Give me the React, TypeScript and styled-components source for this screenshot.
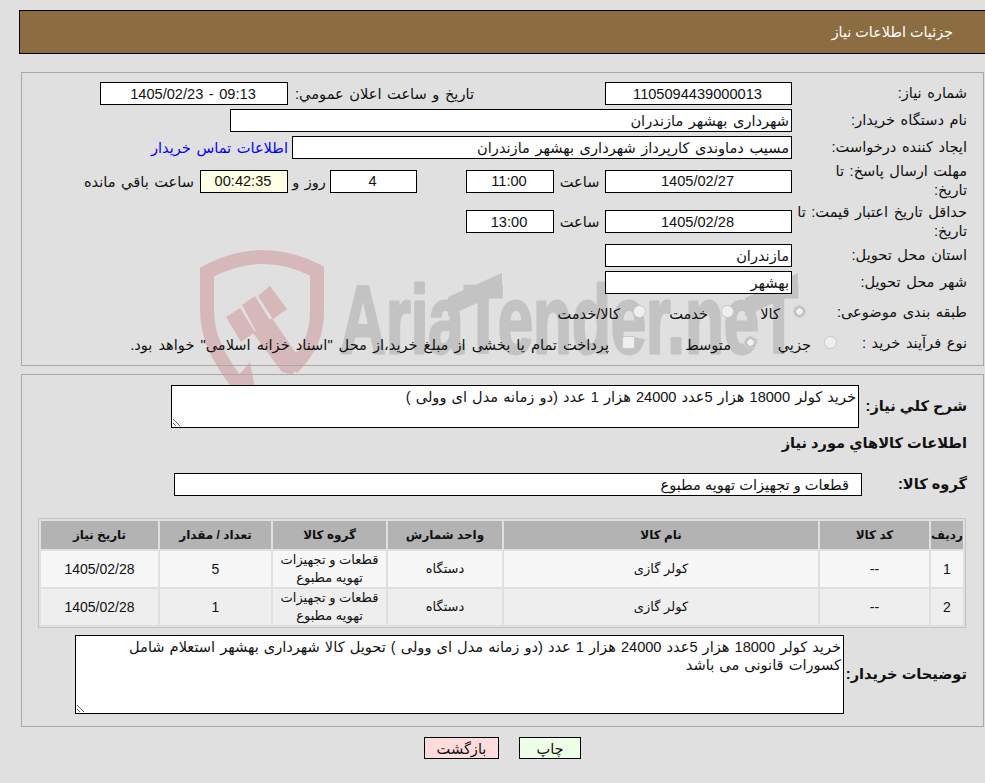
import React, { FC } from "react";
import styled, { createGlobalStyle } from "styled-components";

const FONT = `"Liberation Sans", "DejaVu Sans", sans-serif`;

const GlobalStyle = createGlobalStyle`
  html, body {
    margin: 0;
    padding: 0;
    background-color: #e0e0e0;
  }
  body {
    font-family: ${FONT};
    font-size: 14.6px;
    word-spacing: 1.5px;
    color: #111111;
  }
`;

const goods = [
  { id: 1, qty: 5 },
  { id: 2, qty: 1 },
];

const Watermark: FC = () => (
  <WatermarkSvg viewBox="0 0 985 783" aria-hidden="true">
    <g fill="#d7b8ba" stroke="none">
      <path
        d="M241 388C216 356 207 335 207 310L207 272Q235 257 262 257Q290 257 317 271L317 310C317 335 310 350 292 368"
        fill="none"
        stroke="#d7b8ba"
        strokeWidth="14"
      />
      <polygon points="272,318 302,362 292,375 282,372 253,333" />
      <polygon points="226,317 240,308 255,332 241,342" />
      <polygon points="242,305 255,296 273,325 258,335" />
      <polygon points="258,296 270,286 287,309 273,319" />
      <polygon points="250,362 232,383 255,388" />
    </g>
    <g fill="#c3c3c3" stroke="#c3c3c3">
      <text
        x="340"
        y="353"
        direction="ltr"
        textAnchor="start"
        fontFamily="Liberation Sans"
        fontWeight="700"
        fontSize="97"
        strokeWidth="3"
        strokeLinejoin="round"
        textLength="458"
        lengthAdjust="spacingAndGlyphs"
      >
        AriaTender.neT
      </text>
      <polygon points="448,297 502,273 502,292 448,316" stroke="none" />
      <polygon points="745,298 798,273 798,292 745,316" stroke="none" />
    </g>
  </WatermarkSvg>
);

export default function App() {
  return (
    <Page dir="rtl">
      <GlobalStyle />
      <Watermark />
      <Header>جزئیات اطلاعات نیاز</Header>

      <Panel $mt={18} $pt={7} $pb={7}>
        <Row $h={27}>
          <Label>شماره نیاز:</Label>
          <Field $w={187}>1105094439000013</Field>
          <Caption $w={317} $pr={131}>
            تاریخ و ساعت اعلان عمومي:
          </Caption>
          <Field $w={188}>09:13 - 1405/02/23</Field>
        </Row>
        <Row $h={27}>
          <Label>نام دستگاه خریدار:</Label>
          <Field $w={562} $start>
            شهرداری بهشهر مازندران
          </Field>
        </Row>
        <Row $h={27}>
          <Label>ایجاد کننده درخواست:</Label>
          <Field $w={500} $start>
            مسیب دماوندی کارپرداز شهرداری بهشهر مازندران
          </Field>
          <ContactLink href="#">اطلاعات تماس خریدار</ContactLink>
        </Row>
        <Row $h={40}>
          <Label>
            مهلت ارسال پاسخ: تا
            <br />
            تاریخ:
          </Label>
          <Field $w={187}>1405/02/27</Field>
          <Caption $w={51}>ساعت</Caption>
          <Field $w={88}>11:00</Field>
          <Caption $w={49} />
          <Field $w={87}>4</Field>
          <Caption $w={42}>روز و</Caption>
          <Field $w={88} $timer>
            00:42:35
          </Field>
          <Caption $pr={6}>ساعت باقي مانده</Caption>
        </Row>
        <Row $h={41}>
          <Label>
            حداقل تاریخ اعتبار قیمت: تا
            <br />
            تاریخ:
          </Label>
          <Field $w={187}>1405/02/28</Field>
          <Caption $w={51}>ساعت</Caption>
          <Field $w={88}>13:00</Field>
        </Row>
        <Row $h={27}>
          <Label>استان محل تحویل:</Label>
          <Field $w={187} $start>
            مازندران
          </Field>
        </Row>
        <Row $h={27}>
          <Label>شهر محل تحویل:</Label>
          <Field $w={187} $start>
            بهشهر
          </Field>
        </Row>
        <Row $h={32}>
          <Label $w={161}>طبقه بندی موضوعی:</Label>
          <Option $w={72}>
            <Radio name="kind" defaultChecked />
            کالا
          </Option>
          <Option $w={88}>
            <Radio name="kind" />
            خدمت
          </Option>
          <Option>
            <Radio name="kind" />
            کالا/خدمت
          </Option>
        </Row>
        <Row $h={30}>
          <Label $w={130}>نوع فرآیند خرید :</Label>
          <Option $w={80}>
            <Radio name="process" />
            جزيي
          </Option>
          <Option $w={122}>
            <Radio name="process" defaultChecked />
            متوسط
          </Option>
          <Option $wide>
            <Check />
            پرداخت تمام یا بخشی از مبلغ خرید،از محل "اسناد خزانه اسلامی" خواهد بود.
          </Option>
        </Row>
      </Panel>

      <Panel $mt={8} $pt={10} $pb={12}>
        <Row>
          <Label $w={108} $bold>
            شرح كلي نياز:
          </Label>
          <TextBox
            $w={688}
            $h={43}
            readOnly
            value="خرید کولر 18000 هزار 5عدد 24000 هزار 1 عدد (دو زمانه مدل ای وولی )"
          />
        </Row>
        <Row $h={31}>
          <Label $w="auto" $bold>
            اطلاعات كالاهاي مورد نياز
          </Label>
        </Row>
        <Row $h={23} $mt={14}>
          <Label $w={105} $bold>
            گروه كالا:
          </Label>
          <Field $w={688} $start $pr={12} $tight>
            قطعات و تجهیزات تهویه مطبوع
          </Field>
        </Row>
        <GoodsTable>
          <colgroup>
            <col width={32} />
            <col width={109} />
            <col width={314} />
            <col width={114} />
            <col width={113} />
            <col width={111} />
            <col width={117} />
          </colgroup>
          <thead>
            <tr>
              <th>ردیف</th>
              <th>کد کالا</th>
              <th>نام کالا</th>
              <th>واحد شمارش</th>
              <th>گروه کالا</th>
              <th>تعداد / مقدار</th>
              <th>تاریخ نیاز</th>
            </tr>
          </thead>
          <tbody>
            {goods.map((item) => (
              <tr key={item.id}>
                <td>{item.id}</td>
                <td>--</td>
                <TextCell>کولر گازی</TextCell>
                <TextCell>دستگاه</TextCell>
                <TextCell>قطعات و تجهیزات تهویه مطبوع</TextCell>
                <td>{item.qty}</td>
                <td>1405/02/28</td>
              </tr>
            ))}
          </tbody>
        </GoodsTable>
        <DescriptionRow>
          <Label $w={123} $bold>
            توضیحات خریدار:
          </Label>
          <TextBox
            $w={769}
            $h={79}
            readOnly
            value="خرید کولر 18000 هزار 5عدد 24000 هزار 1 عدد (دو زمانه مدل ای وولی ) تحویل کالا شهرداری بهشهر استعلام شامل کسورات قانونی می باشد"
          />
        </DescriptionRow>
      </Panel>

      <Actions>
        <ActionButton $w={62} $bg="#edffe6">
          چاپ
        </ActionButton>
        <ActionButton $w={75} $bg="#ffdcdc">
          بازگشت
        </ActionButton>
      </Actions>
    </Page>
  );
}

const Page = styled.div`
  position: relative;
  height: 783px;
  box-sizing: border-box;
  padding: 10px 0 0 19px;
  overflow: hidden;
`;

const WatermarkSvg = styled.svg`
  position: absolute;
  left: 0;
  top: 0;
  width: 985px;
  height: 783px;
  pointer-events: none;
`;

const Header = styled.header`
  position: relative;
  height: 44px;
  box-sizing: border-box;
  display: flex;
  align-items: center;
  padding-right: 32px;
  border: 1px solid #000000;
  border-right: none;
  background-color: #8c6d42;
  color: #ffffff;
  font-size: 14.4px;
  word-spacing: 0;
`;

const Panel = styled.section<{ $mt: number; $pt: number; $pb: number }>`
  position: relative;
  margin: ${(p) => p.$mt}px 1px 0 2px;
  padding: ${(p) => p.$pt}px 16px ${(p) => p.$pb}px 0;
  border: 1px solid #a8a8a8;
`;

const Row = styled.div<{ $h?: number; $mt?: number }>`
  display: flex;
  align-items: center;
  ${(p) => p.$h && `height: ${p.$h}px;`}
  ${(p) => p.$mt && `margin-top: ${p.$mt}px;`}
`;

const Label = styled.div<{ $w?: number | "auto"; $bold?: boolean }>`
  flex: none;
  box-sizing: border-box;
  width: ${(p) => (p.$w === "auto" ? "auto" : `${p.$w ?? 175}px`)};
  line-height: 19px;
  white-space: nowrap;
  font-weight: ${(p) => (p.$bold ? 700 : 400)};
  ${(p) => p.$bold && "word-spacing: 0;"}
`;

const Field = styled.div<{
  $w: number;
  $start?: boolean;
  $timer?: boolean;
  $tight?: boolean;
  $pr?: number;
}>`
  flex: none;
  box-sizing: border-box;
  width: ${(p) => p.$w}px;
  height: 23px;
  display: flex;
  align-items: center;
  justify-content: ${(p) => (p.$start ? "flex-start" : "center")};
  padding-right: ${(p) => p.$pr ?? 2}px;
  border: 1px solid #000000;
  background-color: ${(p) => (p.$timer ? "#ffffe6" : "#ffffff")};
  white-space: nowrap;
  ${(p) => p.$tight && "word-spacing: 0;"}
`;

const Caption = styled.div<{ $w?: number; $pr?: number }>`
  flex: none;
  box-sizing: border-box;
  ${(p) => p.$w && `width: ${p.$w}px;`}
  padding-right: ${(p) => p.$pr ?? 0}px;
  text-align: ${(p) => (p.$pr ? "right" : "center")};
  white-space: nowrap;
`;

const ContactLink = styled.a`
  margin-right: 4px;
  color: #0000ff;
  text-decoration: none;
  white-space: nowrap;
`;

const Option = styled.label<{ $w?: number; $wide?: boolean }>`
  flex: none;
  ${(p) => p.$w && `width: ${p.$w}px;`}
  display: flex;
  align-items: center;
  gap: 13px;
  padding-top: 2px;
  white-space: nowrap;
  ${(p) => p.$wide && "word-spacing: 2px;"}
`;

const Radio = styled.input.attrs({ type: "radio", disabled: true })`
  appearance: none;
  flex: none;
  width: 13px;
  height: 13px;
  margin: 0 0 4px;
  border: 1px solid #c8c8c8;
  border-radius: 50%;
  background-color: #efefef;

  &:checked {
    background: radial-gradient(circle, #efefef 0 3px, #c0c0c0 3.5px 5px, #efefef 5.5px);
  }
`;

const Check = styled.input.attrs({ type: "checkbox", disabled: true })`
  appearance: none;
  flex: none;
  width: 13px;
  height: 13px;
  margin: 0 0 4px;
  border: 1px solid #c8c8c8;
  border-radius: 2px;
  background-color: #efefef;
`;

const TextBox = styled.textarea<{ $w: number; $h: number }>`
  flex: none;
  display: block;
  box-sizing: border-box;
  width: ${(p) => p.$w}px;
  height: ${(p) => p.$h}px;
  margin: 0;
  padding: 2px;
  border: 1px solid #000000;
  border-radius: 0;
  outline: none;
  overflow: hidden;
  background-color: #ffffff;
  color: #111111;
  font-family: ${FONT};
  font-size: 14.6px;
  line-height: 18px;
  word-spacing: 1px;
`;

const GoodsTable = styled.table`
  width: 928px;
  margin: 22px 1px 0 0;
  table-layout: fixed;
  border: 1px solid #c4c4c4;
  border-spacing: 2px;

  th,
  td {
    padding: 0;
    text-align: center;
    line-height: 18px;
    font-size: 14px;
    word-spacing: 0;
  }

  th {
    height: 28px;
    background-color: #b3b3b3;
    font-size: 12px;
    font-weight: 700;
  }

  td {
    height: 36px;
  }

  tbody tr:nth-child(odd) td {
    background-color: #f7f7f7;
  }

  tbody tr:nth-child(even) td {
    background-color: #eeeeee;
  }
`;

const TextCell = styled.td`
  && {
    font-size: 13px;
  }
`;

const DescriptionRow = styled.div`
  display: flex;
  align-items: center;
  margin-top: 7px;
`;

const Actions = styled.div`
  position: relative;
  display: flex;
  justify-content: center;
  gap: 20px;
  margin: 10px 1px 0 2px;
`;

const ActionButton = styled.button<{ $w: number; $bg: string }>`
  box-sizing: border-box;
  width: ${(p) => p.$w}px;
  height: 22px;
  padding: 0;
  border: 1px solid #000000;
  background-color: ${(p) => p.$bg};
  color: #111111;
  font-family: ${FONT};
  font-size: 14.6px;
`;
